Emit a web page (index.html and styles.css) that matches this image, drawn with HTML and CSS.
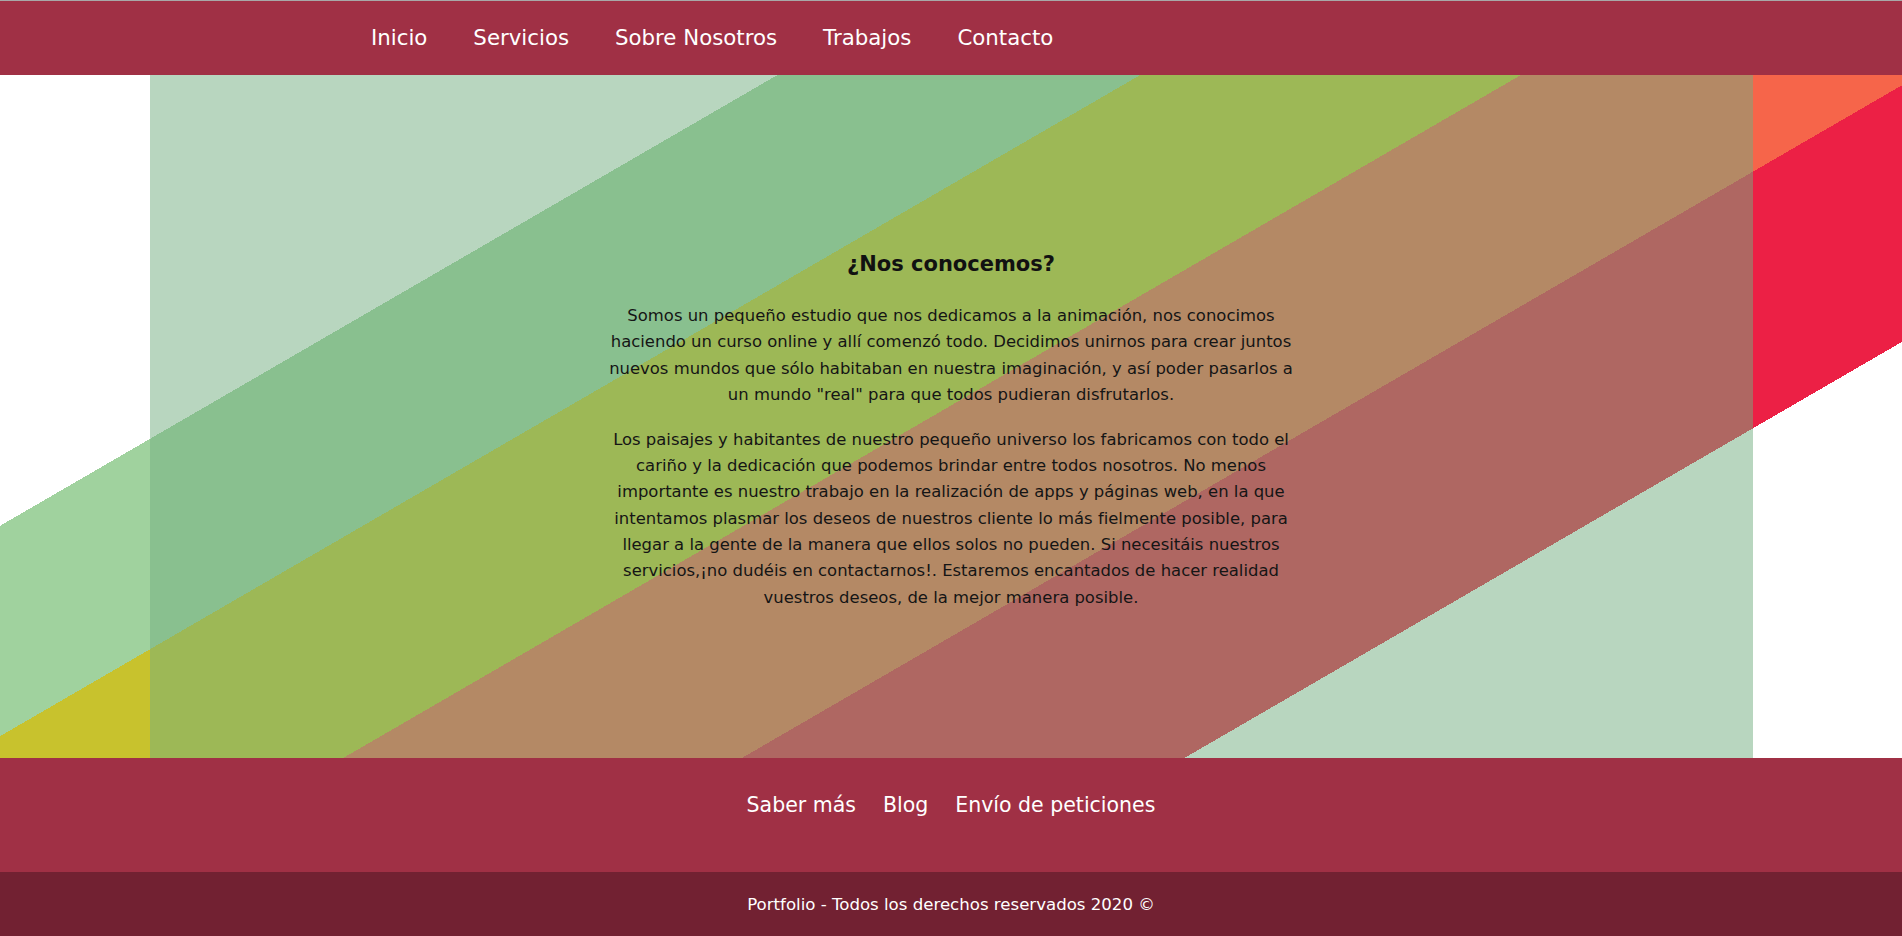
FILE: index.html
```html
<!DOCTYPE html>
<html lang="es">
<head>
<meta charset="utf-8">
<title>Portfolio - Sobre Nosotros</title>
<link rel="stylesheet" href="styles.css">
</head>
<body>
<header class="topbar">
  <nav class="menu">
    <a class="menu-link" href="#">Inicio</a>
    <a class="menu-link" href="#">Servicios</a>
    <a class="menu-link" href="#">Sobre Nosotros</a>
    <a class="menu-link" href="#">Trabajos</a>
    <a class="menu-link" href="#">Contacto</a>
  </nav>
</header>
<main class="hero">
  <div class="panel">
    <section class="about">
      <h2 class="about-title">¿Nos conocemos?</h2>
      <p class="about-text">Somos un pequeño estudio que nos dedicamos a la animación, nos conocimos haciendo un curso online y allí comenzó todo. Decidimos unirnos para crear juntos nuevos mundos que sólo habitaban en nuestra imaginación, y así poder pasarlos a un mundo "real" para que todos pudieran disfrutarlos.</p>
      <p class="about-text">Los paisajes y habitantes de nuestro pequeño universo los fabricamos con todo el cariño y la dedicación que podemos brindar entre todos nosotros. No menos importante es nuestro trabajo en la realización de apps y páginas web, en la que intentamos plasmar los deseos de nuestros cliente lo más fielmente posible, para llegar a la gente de la manera que ellos solos no pueden. Si necesitáis nuestros servicios,¡no dudéis en contactarnos!. Estaremos encantados de hacer realidad vuestros deseos, de la mejor manera posible.</p>
    </section>
  </div>
</main>
<footer class="footer">
  <div class="footer-links">
    <a class="footer-link" href="#">Saber más</a>
    <a class="footer-link" href="#">Blog</a>
    <a class="footer-link" href="#">Envío de peticiones</a>
  </div>
  <div class="copyright">Portfolio - Todos los derechos reservados 2020 ©</div>
</footer>
</body>
</html>
```
FILE: styles.css
```css
* {
  box-sizing: border-box;
}

html, body {
  margin: 0;
  padding: 0;
}

body {
  font-family: "DejaVu Sans", "Liberation Sans", sans-serif;
  color: #111;
  background: #fff;
}

.topbar {
  height: 75px;
  background: #a03045;
  border-top: 1px solid #a8a8a8;
  display: flex;
  align-items: center;
  padding-left: 371px;
}

.menu {
  display: flex;
  gap: 46px;
}

.menu-link {
  color: #fff;
  text-decoration: none;
  font-size: 21.3px;
  line-height: 28px;
}

.hero {
  height: 683px;
  background: linear-gradient(149.89deg,
    #ffffff 0 390px,
    #a0d29e 390px 572px,
    #c8c22d 572px 763px,
    #f6654a 763px 963px,
    #ec2045 963px 1185px,
    #ffffff 1185px);
}

.panel {
  width: 1603px;
  height: 100%;
  margin: 0 auto;
  background: rgba(113, 173, 127, 0.5);
  display: flex;
  justify-content: center;
  padding-top: 175px;
}

.about {
  width: 700px;
  text-align: center;
}

.about-title {
  margin: 0 0 25px;
  font-size: 21px;
  line-height: 28px;
  font-weight: bold;
  color: #111;
}

.about-text {
  margin: 0 0 18.7px;
  font-size: 16.45px;
  line-height: 26.3px;
  color: #151515;
}

.footer-links {
  height: 114px;
  background: #a03045;
  display: flex;
  justify-content: center;
  gap: 27px;
  padding-top: 34px;
}

.footer-link {
  color: #fff;
  text-decoration: none;
  font-size: 20.5px;
  line-height: 26px;
  height: 26px;
}

.copyright {
  height: 64px;
  background: #722132;
  color: #fff;
  font-size: 16.6px;
  line-height: 26px;
  padding-top: 20px;
  text-align: center;
}
```
